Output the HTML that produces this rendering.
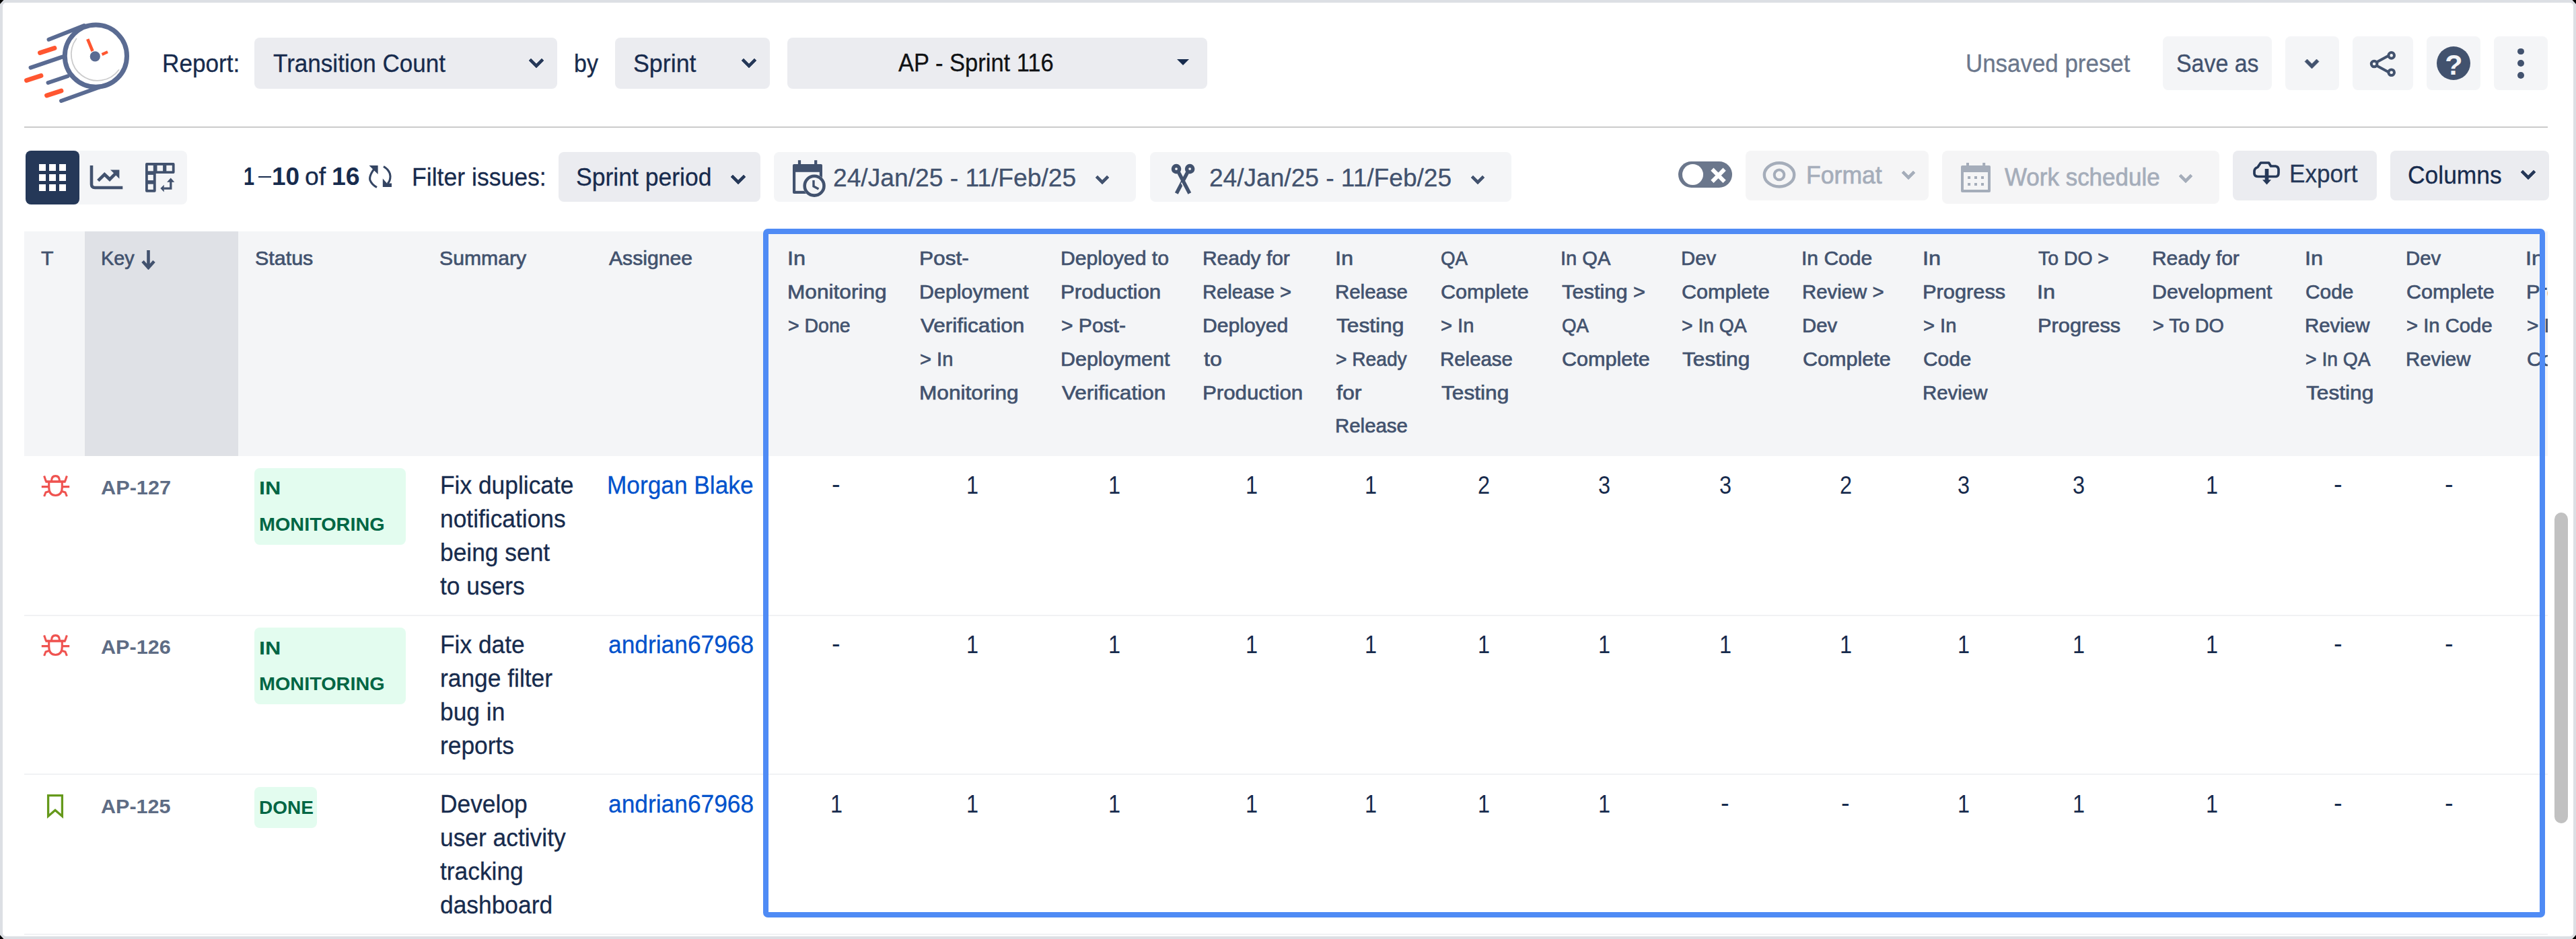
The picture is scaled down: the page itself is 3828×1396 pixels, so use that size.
<!DOCTYPE html>
<html><head><meta charset="utf-8"><title>Transition Count</title>
<style>
html,body{margin:0;padding:0;background:#000;}
body{width:3828px;height:1396px;position:relative;overflow:hidden;font-family:"Liberation Sans",sans-serif;}
#frame{position:absolute;left:0;top:0;width:3828px;height:1396px;background:#dcdfe4;clip-path:polygon(5.5px 0,3822.5px 0,3828px 6px,3828px 1390px,3822.5px 1396px,5.5px 1396px,0 1390px,0 6px);}
#frame2{position:absolute;left:4px;top:4px;width:3820px;height:1388px;background:#fff;border-radius:5px;}
.b{position:absolute;display:block;}
.t{position:absolute;white-space:nowrap;transform-origin:0 50%;display:block;}
</style></head><body><div id="frame"></div><div id="frame2"></div>
<span class="t " style="left:240.94px;top:76.93px;font-size:36px;line-height:36px;color:#172b4d;transform:scaleX(0.9762);-webkit-text-stroke:0.3px #172b4d;">Report:</span>
<div class="b" style="left:378px;top:56px;width:450px;height:75.5px;background:#ebecf0;border-radius:8px;"></div>
<span class="t " style="left:405.95px;top:76.93px;font-size:36px;line-height:36px;color:#172b4d;transform:scaleX(0.9744);-webkit-text-stroke:0.3px #172b4d;">Transition Count</span>
<svg class="b" style="left:786.0px;top:87.2px;overflow:visible;" width="22" height="14" viewBox="0 0 22 14"><path d="M0.00 3.00 L3.00 0.00 L11.00 8.00 L19.00 0.00 L22.00 3.00 L11.00 14.00Z" fill="#253858" stroke="#253858" stroke-width="0.6" stroke-linejoin="round"/></svg>
<span class="t " style="left:853.43px;top:76.93px;font-size:36px;line-height:36px;color:#172b4d;transform:scaleX(0.9432);-webkit-text-stroke:0.3px #172b4d;">by</span>
<div class="b" style="left:914px;top:56px;width:230px;height:75.5px;background:#ebecf0;border-radius:8px;"></div>
<span class="t " style="left:940.54px;top:76.93px;font-size:36px;line-height:36px;color:#172b4d;transform:scaleX(0.9940);-webkit-text-stroke:0.3px #172b4d;">Sprint</span>
<svg class="b" style="left:1102.0px;top:87.2px;overflow:visible;" width="22" height="14" viewBox="0 0 22 14"><path d="M0.00 3.00 L3.00 0.00 L11.00 8.00 L19.00 0.00 L22.00 3.00 L11.00 14.00Z" fill="#253858" stroke="#253858" stroke-width="0.6" stroke-linejoin="round"/></svg>
<div class="b" style="left:1170px;top:56px;width:624px;height:75.5px;background:#ebecf0;border-radius:8px;"></div>
<span class="t " style="left:1335.15px;top:75.53px;font-size:36px;line-height:36px;color:#101214;transform:scaleX(0.9581);-webkit-text-stroke:0.3px #101214;">AP - Sprint 116</span>
<svg class="b" style="left:1749px;top:88px;" width="18" height="9" viewBox="0 0 18 9"><path d="M0 0H18L9 9Z" fill="#172b4d"/></svg>
<span class="t " style="left:2920.53px;top:76.93px;font-size:36px;line-height:36px;color:#6b778c;transform:scaleX(0.9695);-webkit-text-stroke:0.3px #6b778c;">Unsaved preset</span>
<div class="b" style="left:3214px;top:54px;width:162px;height:80px;background:#f4f5f7;border-radius:8px;"></div>
<span class="t " style="left:3234.43px;top:76.53px;font-size:36px;line-height:36px;color:#42526e;transform:scaleX(0.9413);-webkit-text-stroke:0.3px #42526e;">Save as</span>
<div class="b" style="left:3396px;top:54px;width:80px;height:80px;background:#f4f5f7;border-radius:8px;"></div>
<svg class="b" style="left:3425.3px;top:87.7px;overflow:visible;" width="21" height="14" viewBox="0 0 21 14"><path d="M0.00 3.50 L3.50 0.00 L10.50 7.00 L17.50 0.00 L21.00 3.50 L10.50 14.00Z" fill="#42526e" stroke="#42526e" stroke-width="0.6" stroke-linejoin="round"/></svg>
<div class="b" style="left:3496px;top:54px;width:90px;height:80px;background:#f4f5f7;border-radius:8px;"></div>
<div class="b" style="left:3606px;top:54px;width:80px;height:80px;background:#f4f5f7;border-radius:8px;"></div>
<div class="b" style="left:3706px;top:54px;width:80px;height:80px;background:#f4f5f7;border-radius:8px;"></div>
<div class="b" style="left:36px;top:188px;width:3750px;height:2px;background:#cbcbcb;border-radius:0px;"></div>
<div class="b" style="left:38px;top:224px;width:240px;height:80px;background:#f4f5f7;border-radius:8px;"></div>
<div class="b" style="left:38px;top:224px;width:80px;height:80px;background:#253858;border-radius:8px;"></div>
<span class="t " style="left:361.70px;top:245.13px;font-size:36px;line-height:36px;color:#172b4d;font-weight:700;transform:scaleX(0.8021);">1</span>
<div class="b" style="left:384px;top:261.6px;width:18.80000000000001px;height:2.7999999999999545px;background:#172b4d;border-radius:0px;"></div>
<span class="t " style="left:403.89px;top:245.13px;font-size:36px;line-height:36px;color:#172b4d;font-weight:700;transform:scaleX(1.0259);">10</span>
<span class="t " style="left:453.06px;top:245.13px;font-size:36px;line-height:36px;color:#172b4d;transform:scaleX(1.0377);-webkit-text-stroke:0.3px #172b4d;">of</span>
<span class="t " style="left:493.06px;top:245.13px;font-size:36px;line-height:36px;color:#172b4d;font-weight:700;transform:scaleX(1.0400);">16</span>
<span class="t " style="left:612.30px;top:245.53px;font-size:36px;line-height:36px;color:#172b4d;transform:scaleX(0.9886);-webkit-text-stroke:0.3px #172b4d;">Filter issues:</span>
<div class="b" style="left:830px;top:226px;width:300px;height:73.5px;background:#ebecf0;border-radius:8px;"></div>
<span class="t " style="left:855.55px;top:245.53px;font-size:36px;line-height:36px;color:#172b4d;transform:scaleX(0.9873);-webkit-text-stroke:0.3px #172b4d;">Sprint period</span>
<svg class="b" style="left:1085.5px;top:260.0px;overflow:visible;" width="22" height="14" viewBox="0 0 22 14"><path d="M0.00 3.00 L3.00 0.00 L11.00 8.00 L19.00 0.00 L22.00 3.00 L11.00 14.00Z" fill="#253858" stroke="#253858" stroke-width="0.6" stroke-linejoin="round"/></svg>
<div class="b" style="left:1149.5px;top:226px;width:538.5px;height:73.5px;background:#f4f5f7;border-radius:8px;"></div>
<span class="t " style="left:1238.29px;top:247.33px;font-size:36px;line-height:36px;color:#42526e;transform:scaleX(1.0329);-webkit-text-stroke:0.3px #42526e;">24/Jan/25 - 11/Feb/25</span>
<svg class="b" style="left:1628.0px;top:260.7px;overflow:visible;" width="20" height="13" viewBox="0 0 20 13"><path d="M0.00 3.00 L3.00 0.00 L10.00 7.00 L17.00 0.00 L20.00 3.00 L10.00 13.00Z" fill="#42526e" stroke="#42526e" stroke-width="0.6" stroke-linejoin="round"/></svg>
<div class="b" style="left:1708.5px;top:226px;width:537.5px;height:73.5px;background:#f4f5f7;border-radius:8px;"></div>
<span class="t " style="left:1797.30px;top:247.33px;font-size:36px;line-height:36px;color:#42526e;transform:scaleX(1.0300);-webkit-text-stroke:0.3px #42526e;">24/Jan/25 - 11/Feb/25</span>
<svg class="b" style="left:2186.0px;top:260.7px;overflow:visible;" width="20" height="13" viewBox="0 0 20 13"><path d="M0.00 3.00 L3.00 0.00 L10.00 7.00 L17.00 0.00 L20.00 3.00 L10.00 13.00Z" fill="#42526e" stroke="#42526e" stroke-width="0.6" stroke-linejoin="round"/></svg>
<div class="b" style="left:2594px;top:224px;width:272px;height:73.5px;background:#f5f5f6;border-radius:8px;"></div>
<span class="t " style="left:2683.50px;top:242.93px;font-size:36px;line-height:36px;color:#a5adba;transform:scaleX(0.9886);-webkit-text-stroke:0.7px #a5adba;">Format</span>
<svg class="b" style="left:2826.0px;top:254.3px;overflow:visible;" width="20" height="13" viewBox="0 0 20 13"><path d="M0.00 3.00 L3.00 0.00 L10.00 7.00 L17.00 0.00 L20.00 3.00 L10.00 13.00Z" fill="#a5adba" stroke="#a5adba" stroke-width="0.6" stroke-linejoin="round"/></svg>
<div class="b" style="left:2886px;top:224px;width:412px;height:79.39999999999998px;background:#f5f5f6;border-radius:8px;"></div>
<span class="t " style="left:2978.56px;top:245.53px;font-size:36px;line-height:36px;color:#a5adba;transform:scaleX(0.9712);-webkit-text-stroke:0.7px #a5adba;">Work schedule</span>
<svg class="b" style="left:3238.2px;top:258.5px;overflow:visible;" width="20" height="13" viewBox="0 0 20 13"><path d="M0.00 3.00 L3.00 0.00 L10.00 7.00 L17.00 0.00 L20.00 3.00 L10.00 13.00Z" fill="#a5adba" stroke="#a5adba" stroke-width="0.6" stroke-linejoin="round"/></svg>
<div class="b" style="left:3318px;top:224px;width:214px;height:73.5px;background:#ebecf0;border-radius:8px;"></div>
<span class="t " style="left:3402.34px;top:240.93px;font-size:36px;line-height:36px;color:#253858;transform:scaleX(0.9754);-webkit-text-stroke:0.3px #253858;">Export</span>
<div class="b" style="left:3552px;top:224px;width:236px;height:73.5px;background:#ebecf0;border-radius:8px;"></div>
<span class="t " style="left:3577.78px;top:242.93px;font-size:36px;line-height:36px;color:#172b4d;transform:scaleX(0.9837);-webkit-text-stroke:0.3px #172b4d;">Columns</span>
<svg class="b" style="left:3745.8px;top:252.7px;overflow:visible;" width="22" height="14" viewBox="0 0 22 14"><path d="M0.00 3.00 L3.00 0.00 L11.00 8.00 L19.00 0.00 L22.00 3.00 L11.00 14.00Z" fill="#253858" stroke="#253858" stroke-width="0.6" stroke-linejoin="round"/></svg>
<svg class="b" style="left:0px;top:0px;" width="220" height="180" viewBox="0 0 220 180">
<g fill="none" stroke-linecap="round">
<circle cx="142.4" cy="83.2" r="46.1" stroke="#5a6b92" stroke-width="7"/>
<path d="M113.5 57.5A38.6 38.6 0 1 0 176.5 104" stroke="#cbcbcc" stroke-width="1.8"/>
<g stroke="#5a6b92" stroke-width="5.9">
<path d="M72.5 58.8L125 38"/>
<path d="M45.5 100.6L92.5 84.6"/>
<path d="M71.5 123L100.5 113.2"/>
<path d="M91 150L164 123.8"/>
</g>
<g stroke="#ff5630" stroke-width="6.8">
<path d="M59.5 78.6L81 71.6"/>
<path d="M39.5 119.6L61 112.6"/>
<path d="M69.5 142L91 135"/>
</g>
<path d="M130.2 58.2L137.6 76" stroke="#ff5630" stroke-width="4.6" stroke-linecap="butt"/>
<path d="M151.5 81L160 77.2" stroke="#ff5630" stroke-width="4.2" stroke-linecap="butt"/>
</g>
<circle cx="141.3" cy="83.9" r="7.6" fill="#5a6b92"/>
</svg>
<svg class="b" style="left:3500px;top:50px;" width="80" height="80" viewBox="0 0 80 80"><g fill="none" stroke="#42526e" stroke-width="4">
<path d="M31.6 42.5L50 32.5M31.6 47.5L50 57.5"/>
<circle cx="28.1" cy="45" r="4.3"/><circle cx="53.7" cy="32.4" r="4.3"/><circle cx="53.7" cy="57.8" r="4.3"/></g></svg>
<div class="b" style="left:3620.8px;top:69px;width:50px;height:50px;border-radius:50%;background:#42526e"></div>
<span class="t" style="left:3633.2px;top:74.8px;font-size:43px;line-height:43px;font-weight:700;color:#f4f5f7;">?</span>
<div class="b" style="left:3740.8px;top:71.7px;width:9.8px;height:9.8px;border-radius:50%;background:#42526e"></div>
<div class="b" style="left:3740.8px;top:89.2px;width:9.8px;height:9.8px;border-radius:50%;background:#42526e"></div>
<div class="b" style="left:3740.8px;top:106.8px;width:9.8px;height:9.8px;border-radius:50%;background:#42526e"></div>
<div class="b" style="left:58px;top:244px;width:10.3px;height:10.3px;background:#fff"></div>
<div class="b" style="left:73px;top:244px;width:10.3px;height:10.3px;background:#fff"></div>
<div class="b" style="left:88px;top:244px;width:10.3px;height:10.3px;background:#fff"></div>
<div class="b" style="left:58px;top:259px;width:10.3px;height:10.3px;background:#fff"></div>
<div class="b" style="left:73px;top:259px;width:10.3px;height:10.3px;background:#fff"></div>
<div class="b" style="left:88px;top:259px;width:10.3px;height:10.3px;background:#fff"></div>
<div class="b" style="left:58px;top:274px;width:10.3px;height:10.3px;background:#fff"></div>
<div class="b" style="left:73px;top:274px;width:10.3px;height:10.3px;background:#fff"></div>
<div class="b" style="left:88px;top:274px;width:10.3px;height:10.3px;background:#fff"></div>
<svg class="b" style="left:130px;top:243px;" width="56" height="42" viewBox="0 0 56 42"><g fill="none" stroke="#42526e">
<path d="M6 3V31Q6 36 11 36H52.3" stroke-width="4.6"/>
<path d="M15.8 25.6L25.3 16.3L33 23.6L43 13.6" stroke-width="4.8"/></g>
<path d="M34 9.4H47.4V22.8Z" fill="#42526e"/></svg>
<svg class="b" style="left:216.2px;top:241.9px;" width="48" height="48" viewBox="0 0 48 48"><path d="M2 0H41.6Q43.6 0 43.6 2V14.1Q43.6 16.1 41.6 16.1H15.7V41.7Q15.7 43.7 13.7 43.7H2Q0 43.7 0 41.7V2Q0 0 2 0Z" fill="#42526e"/>
<g fill="#f4f5f7"><rect x="3.8" y="3.9" width="8" height="8.4"/><rect x="17.5" y="3.9" width="8.6" height="8.4"/><rect x="31.3" y="3.9" width="8.5" height="8.4"/><rect x="3.8" y="17.9" width="8" height="8.2"/><rect x="3.8" y="31.7" width="8" height="8.2"/></g>
<path d="M27.4 38.1H37.8V28" fill="none" stroke="#42526e" stroke-width="3.3"/>
<path d="M32.1 28.7L37.7 22.4L43.3 28.7Z M27.7 32.7L22.4 38.1L27.7 43.5Z" fill="#42526e"/></svg>
<svg class="b" style="left:546px;top:244px;" width="38" height="38" viewBox="0 0 38 38"><g fill="none" stroke="#344563" stroke-width="3.1">
<path d="M11 6Q2 17 4 24Q6.5 30.5 14 34.5"/>
<path d="M24 3.5Q33.5 9 34 18Q34 25 30 29"/></g>
<path d="M2.5 2H15.6V15L11 10.5Z" fill="#344563"/>
<path d="M22.8 21.5V34H36V28.5H29Z" fill="#344563"/></svg>
<svg class="b" style="left:1176px;top:236px;" width="56" height="60" viewBox="0 0 56 60"><path d="M4 8H44Q46 8 46 10V50Q46 52 44 52H4Q2 52 2 50V10Q2 8 4 8Z" fill="#42526e"/>
<rect x="6.2" y="19.8" width="35.6" height="28" fill="#f4f5f7"/>
<rect x="9.9" y="2.2" width="4.2" height="8" fill="#42526e"/><rect x="34.1" y="2.2" width="4.2" height="8" fill="#42526e"/>
<circle cx="34.1" cy="40.2" r="16.8" fill="#f4f5f7"/>
<circle cx="34.1" cy="40.2" r="14.4" fill="none" stroke="#42526e" stroke-width="4.6"/>
<path d="M33 32V41L40.5 45" fill="none" stroke="#42526e" stroke-width="3.4"/></svg>
<svg class="b" style="left:1738px;top:241px;" width="40" height="50" viewBox="0 0 40 50"><g fill="none" stroke="#42526e">
<circle cx="10" cy="10.1" r="4.6" stroke-width="5.4"/><circle cx="30.1" cy="10.1" r="4.6" stroke-width="5.4"/>
<path d="M27.3 14L10.3 46.4" stroke-width="5.4" />
<path d="M20.6 29L29.8 46.4" stroke-width="8.6" stroke="#f4f5f7"/>
<path d="M12.8 14L29.8 46.4" stroke-width="5.4" />
</g></svg>
<div class="b" style="left:2494px;top:239.8px;width:80px;height:39.4px;border-radius:20px;background:#6b778c"></div>
<div class="b" style="left:2499.6px;top:244.2px;width:31px;height:31px;border-radius:50%;background:#fff"></div>
<svg class="b" style="left:2542px;top:248.5px;" width="23" height="23" viewBox="0 0 23 23"><path d="M4.5 4.8L18.5 18.8M18.5 4.8L4.5 18.8" stroke="#fff" stroke-width="6" stroke-linecap="square"/></svg>
<svg class="b" style="left:2618px;top:238px;" width="52" height="44" viewBox="0 0 52 44"><g fill="none" stroke="#a5adba">
<ellipse cx="26" cy="21.9" rx="22.2" ry="17.6" stroke-width="4.4"/>
<circle cx="26" cy="21.9" r="7.3" stroke-width="4"/></g></svg>
<svg class="b" style="left:2912px;top:240px;" width="48" height="48" viewBox="0 0 48 48"><path d="M4 6H44Q46 6 46 8V44Q46 46 44 46H4Q2 46 2 44V8Q2 6 4 6Z" fill="#a5adba"/>
<rect x="6" y="16" width="36" height="26" fill="#f5f5f6"/>
<rect x="10" y="2" width="4" height="6" fill="#a5adba"/><rect x="34.2" y="2" width="4" height="6" fill="#a5adba"/>
<g fill="#a5adba"><rect x="12.1" y="22" width="4" height="4"/><rect x="12.1" y="32" width="4" height="4"/><rect x="22" y="22" width="4" height="4"/><rect x="22" y="32" width="4" height="4"/><rect x="32" y="22" width="4" height="4"/><rect x="32" y="32" width="4" height="4"/></g></svg>
<svg class="b" style="left:3345.6px;top:237.5px;" width="46" height="40" viewBox="0 0 46 40"><path d="M10 24.5H36.5Q40 24 40 19V13.5Q39.5 9.5 35.5 9H28.5L25.5 4H13.5L9 10.5Q4.5 12 4 16V20.5Q4.5 24.5 10 24.5Z" fill="none" stroke="#253858" stroke-width="3.7" stroke-linejoin="round"/>
<rect x="19.7" y="13" width="5.6" height="18" fill="#253858"/>
<path d="M16 29.3H29L22.5 36.4Z" fill="#253858"/></svg>
<div class="b" style="left:36px;top:344px;width:3750px;height:333.5px;background:#f4f5f7;border-radius:0px;"></div>
<div class="b" style="left:126px;top:344px;width:228px;height:333.5px;background:#dfe1e6;border-radius:0px;"></div>
<span class="t " style="left:61.04px;top:367.67px;font-size:30.4px;line-height:30.4px;color:#42526e;transform:scaleX(0.9984);-webkit-text-stroke:0.7px #42526e;">T</span>
<span class="t " style="left:149.75px;top:367.67px;font-size:30.4px;line-height:30.4px;color:#42526e;transform:scaleX(0.9473);-webkit-text-stroke:0.7px #42526e;">Key</span>
<span class="t " style="left:378.68px;top:367.67px;font-size:30.4px;line-height:30.4px;color:#42526e;transform:scaleX(1.0018);-webkit-text-stroke:0.7px #42526e;">Status</span>
<span class="t " style="left:652.99px;top:367.67px;font-size:30.4px;line-height:30.4px;color:#42526e;transform:scaleX(0.9933);-webkit-text-stroke:0.7px #42526e;">Summary</span>
<span class="t " style="left:905.35px;top:367.67px;font-size:30.4px;line-height:30.4px;color:#42526e;transform:scaleX(0.9925);-webkit-text-stroke:0.7px #42526e;">Assignee</span>
<svg class="b" style="left:210px;top:371px;" width="21" height="30" viewBox="0 0 21 30"><path d="M10.5 1V26M2 17.5L10.5 27L19 17.5" fill="none" stroke="#42526e" stroke-width="4.6" stroke-linejoin="miter"/></svg>
<div class="b" style="left:36px;top:344px;width:3750px;height:334px;overflow:hidden">
<span class="t " style="left:1133.62px;top:24.37px;font-size:30.4px;line-height:30.4px;color:#42526e;transform:scaleX(1.0691);-webkit-text-stroke:0.7px #42526e;">In</span>
<span class="t " style="left:1134.02px;top:74.17px;font-size:30.4px;line-height:30.4px;color:#42526e;transform:scaleX(1.0403);-webkit-text-stroke:0.7px #42526e;">Monitoring</span>
<span class="t " style="left:1135.20px;top:123.97px;font-size:30.4px;line-height:30.4px;color:#42526e;transform:scaleX(0.9372);-webkit-text-stroke:0.7px #42526e;">&gt; Done</span>
<span class="t " style="left:1329.52px;top:24.37px;font-size:30.4px;line-height:30.4px;color:#42526e;transform:scaleX(1.0419);-webkit-text-stroke:0.7px #42526e;">Post-</span>
<span class="t " style="left:1329.61px;top:74.17px;font-size:30.4px;line-height:30.4px;color:#42526e;transform:scaleX(1.0013);-webkit-text-stroke:0.7px #42526e;">Deployment</span>
<span class="t " style="left:1331.97px;top:123.97px;font-size:30.4px;line-height:30.4px;color:#42526e;transform:scaleX(1.0376);-webkit-text-stroke:0.7px #42526e;">Verification</span>
<span class="t " style="left:1330.67px;top:173.77px;font-size:30.4px;line-height:30.4px;color:#42526e;transform:scaleX(0.9588);-webkit-text-stroke:0.7px #42526e;">&gt; In</span>
<span class="t " style="left:1329.52px;top:223.57px;font-size:30.4px;line-height:30.4px;color:#42526e;transform:scaleX(1.0403);-webkit-text-stroke:0.7px #42526e;">Monitoring</span>
<span class="t " style="left:1539.64px;top:24.37px;font-size:30.4px;line-height:30.4px;color:#42526e;transform:scaleX(0.9922);-webkit-text-stroke:0.7px #42526e;">Deployed to</span>
<span class="t " style="left:1539.55px;top:74.17px;font-size:30.4px;line-height:30.4px;color:#42526e;transform:scaleX(1.0271);-webkit-text-stroke:0.7px #42526e;">Production</span>
<span class="t " style="left:1540.62px;top:123.97px;font-size:30.4px;line-height:30.4px;color:#42526e;transform:scaleX(0.9874);-webkit-text-stroke:0.7px #42526e;">&gt; Post-</span>
<span class="t " style="left:1539.61px;top:173.77px;font-size:30.4px;line-height:30.4px;color:#42526e;transform:scaleX(1.0013);-webkit-text-stroke:0.7px #42526e;">Deployment</span>
<span class="t " style="left:1541.97px;top:223.57px;font-size:30.4px;line-height:30.4px;color:#42526e;transform:scaleX(1.0376);-webkit-text-stroke:0.7px #42526e;">Verification</span>
<span class="t " style="left:1750.65px;top:24.37px;font-size:30.4px;line-height:30.4px;color:#42526e;transform:scaleX(0.9853);-webkit-text-stroke:0.7px #42526e;">Ready for</span>
<span class="t " style="left:1750.72px;top:74.17px;font-size:30.4px;line-height:30.4px;color:#42526e;transform:scaleX(0.9596);-webkit-text-stroke:0.7px #42526e;">Release &gt;</span>
<span class="t " style="left:1750.64px;top:123.97px;font-size:30.4px;line-height:30.4px;color:#42526e;transform:scaleX(0.9903);-webkit-text-stroke:0.7px #42526e;">Deployed</span>
<span class="t " style="left:1752.57px;top:173.77px;font-size:30.4px;line-height:30.4px;color:#42526e;transform:scaleX(1.0577);-webkit-text-stroke:0.7px #42526e;">to</span>
<span class="t " style="left:1750.55px;top:223.57px;font-size:30.4px;line-height:30.4px;color:#42526e;transform:scaleX(1.0271);-webkit-text-stroke:0.7px #42526e;">Production</span>
<span class="t " style="left:1947.62px;top:24.37px;font-size:30.4px;line-height:30.4px;color:#42526e;transform:scaleX(1.0691);-webkit-text-stroke:0.7px #42526e;">In</span>
<span class="t " style="left:1948.20px;top:74.17px;font-size:30.4px;line-height:30.4px;color:#42526e;transform:scaleX(0.9678);-webkit-text-stroke:0.7px #42526e;">Release</span>
<span class="t " style="left:1949.92px;top:123.97px;font-size:30.4px;line-height:30.4px;color:#42526e;transform:scaleX(1.0418);-webkit-text-stroke:0.7px #42526e;">Testing</span>
<span class="t " style="left:1949.21px;top:173.77px;font-size:30.4px;line-height:30.4px;color:#42526e;transform:scaleX(0.9260);-webkit-text-stroke:0.7px #42526e;">&gt; Ready</span>
<span class="t " style="left:1950.15px;top:223.57px;font-size:30.4px;line-height:30.4px;color:#42526e;transform:scaleX(1.0561);-webkit-text-stroke:0.7px #42526e;">for</span>
<span class="t " style="left:1948.20px;top:273.37px;font-size:30.4px;line-height:30.4px;color:#42526e;transform:scaleX(0.9678);-webkit-text-stroke:0.7px #42526e;">Release</span>
<span class="t " style="left:2105.30px;top:24.37px;font-size:30.4px;line-height:30.4px;color:#42526e;transform:scaleX(0.9109);-webkit-text-stroke:0.7px #42526e;">QA</span>
<span class="t " style="left:2105.02px;top:74.17px;font-size:30.4px;line-height:30.4px;color:#42526e;transform:scaleX(1.0055);-webkit-text-stroke:0.7px #42526e;">Complete</span>
<span class="t " style="left:2105.17px;top:123.97px;font-size:30.4px;line-height:30.4px;color:#42526e;transform:scaleX(0.9588);-webkit-text-stroke:0.7px #42526e;">&gt; In</span>
<span class="t " style="left:2104.20px;top:173.77px;font-size:30.4px;line-height:30.4px;color:#42526e;transform:scaleX(0.9678);-webkit-text-stroke:0.7px #42526e;">Release</span>
<span class="t " style="left:2105.92px;top:223.57px;font-size:30.4px;line-height:30.4px;color:#42526e;transform:scaleX(1.0418);-webkit-text-stroke:0.7px #42526e;">Testing</span>
<span class="t " style="left:2283.43px;top:24.37px;font-size:30.4px;line-height:30.4px;color:#42526e;transform:scaleX(0.9568);-webkit-text-stroke:0.7px #42526e;">In QA</span>
<span class="t " style="left:2285.43px;top:74.17px;font-size:30.4px;line-height:30.4px;color:#42526e;transform:scaleX(1.0130);-webkit-text-stroke:0.7px #42526e;">Testing &gt;</span>
<span class="t " style="left:2284.80px;top:123.97px;font-size:30.4px;line-height:30.4px;color:#42526e;transform:scaleX(0.9109);-webkit-text-stroke:0.7px #42526e;">QA</span>
<span class="t " style="left:2284.52px;top:173.77px;font-size:30.4px;line-height:30.4px;color:#42526e;transform:scaleX(1.0055);-webkit-text-stroke:0.7px #42526e;">Complete</span>
<span class="t " style="left:2462.40px;top:24.37px;font-size:30.4px;line-height:30.4px;color:#42526e;transform:scaleX(0.9645);-webkit-text-stroke:0.7px #42526e;">Dev</span>
<span class="t " style="left:2463.22px;top:74.17px;font-size:30.4px;line-height:30.4px;color:#42526e;transform:scaleX(1.0055);-webkit-text-stroke:0.7px #42526e;">Complete</span>
<span class="t " style="left:2463.41px;top:123.97px;font-size:30.4px;line-height:30.4px;color:#42526e;transform:scaleX(0.9312);-webkit-text-stroke:0.7px #42526e;">&gt; In QA</span>
<span class="t " style="left:2464.12px;top:173.77px;font-size:30.4px;line-height:30.4px;color:#42526e;transform:scaleX(1.0418);-webkit-text-stroke:0.7px #42526e;">Testing</span>
<span class="t " style="left:2641.34px;top:24.37px;font-size:30.4px;line-height:30.4px;color:#42526e;transform:scaleX(0.9888);-webkit-text-stroke:0.7px #42526e;">In Code</span>
<span class="t " style="left:2641.70px;top:74.17px;font-size:30.4px;line-height:30.4px;color:#42526e;transform:scaleX(0.9660);-webkit-text-stroke:0.7px #42526e;">Review &gt;</span>
<span class="t " style="left:2641.70px;top:123.97px;font-size:30.4px;line-height:30.4px;color:#42526e;transform:scaleX(0.9645);-webkit-text-stroke:0.7px #42526e;">Dev</span>
<span class="t " style="left:2642.52px;top:173.77px;font-size:30.4px;line-height:30.4px;color:#42526e;transform:scaleX(1.0055);-webkit-text-stroke:0.7px #42526e;">Complete</span>
<span class="t " style="left:2820.62px;top:24.37px;font-size:30.4px;line-height:30.4px;color:#42526e;transform:scaleX(1.0691);-webkit-text-stroke:0.7px #42526e;">In</span>
<span class="t " style="left:2821.09px;top:74.17px;font-size:30.4px;line-height:30.4px;color:#42526e;transform:scaleX(1.0129);-webkit-text-stroke:0.7px #42526e;">Progress</span>
<span class="t " style="left:2822.17px;top:123.97px;font-size:30.4px;line-height:30.4px;color:#42526e;transform:scaleX(0.9588);-webkit-text-stroke:0.7px #42526e;">&gt; In</span>
<span class="t " style="left:2822.05px;top:173.77px;font-size:30.4px;line-height:30.4px;color:#42526e;transform:scaleX(0.9836);-webkit-text-stroke:0.7px #42526e;">Code</span>
<span class="t " style="left:2821.20px;top:223.57px;font-size:30.4px;line-height:30.4px;color:#42526e;transform:scaleX(0.9676);-webkit-text-stroke:0.7px #42526e;">Review</span>
<span class="t " style="left:2993.48px;top:24.37px;font-size:30.4px;line-height:30.4px;color:#42526e;transform:scaleX(0.9343);-webkit-text-stroke:0.7px #42526e;">To DO &gt;</span>
<span class="t " style="left:2991.12px;top:74.17px;font-size:30.4px;line-height:30.4px;color:#42526e;transform:scaleX(1.0691);-webkit-text-stroke:0.7px #42526e;">In</span>
<span class="t " style="left:2991.59px;top:123.97px;font-size:30.4px;line-height:30.4px;color:#42526e;transform:scaleX(1.0129);-webkit-text-stroke:0.7px #42526e;">Progress</span>
<span class="t " style="left:3162.25px;top:24.37px;font-size:30.4px;line-height:30.4px;color:#42526e;transform:scaleX(0.9853);-webkit-text-stroke:0.7px #42526e;">Ready for</span>
<span class="t " style="left:3162.23px;top:74.17px;font-size:30.4px;line-height:30.4px;color:#42526e;transform:scaleX(0.9969);-webkit-text-stroke:0.7px #42526e;">Development</span>
<span class="t " style="left:3163.28px;top:123.97px;font-size:30.4px;line-height:30.4px;color:#42526e;transform:scaleX(0.9467);-webkit-text-stroke:0.7px #42526e;">&gt; To DO</span>
<span class="t " style="left:3388.82px;top:24.37px;font-size:30.4px;line-height:30.4px;color:#42526e;transform:scaleX(1.0691);-webkit-text-stroke:0.7px #42526e;">In</span>
<span class="t " style="left:3390.25px;top:74.17px;font-size:30.4px;line-height:30.4px;color:#42526e;transform:scaleX(0.9836);-webkit-text-stroke:0.7px #42526e;">Code</span>
<span class="t " style="left:3389.40px;top:123.97px;font-size:30.4px;line-height:30.4px;color:#42526e;transform:scaleX(0.9676);-webkit-text-stroke:0.7px #42526e;">Review</span>
<span class="t " style="left:3390.41px;top:173.77px;font-size:30.4px;line-height:30.4px;color:#42526e;transform:scaleX(0.9312);-webkit-text-stroke:0.7px #42526e;">&gt; In QA</span>
<span class="t " style="left:3391.12px;top:223.57px;font-size:30.4px;line-height:30.4px;color:#42526e;transform:scaleX(1.0418);-webkit-text-stroke:0.7px #42526e;">Testing</span>
<span class="t " style="left:3538.70px;top:24.37px;font-size:30.4px;line-height:30.4px;color:#42526e;transform:scaleX(0.9645);-webkit-text-stroke:0.7px #42526e;">Dev</span>
<span class="t " style="left:3539.52px;top:74.17px;font-size:30.4px;line-height:30.4px;color:#42526e;transform:scaleX(1.0055);-webkit-text-stroke:0.7px #42526e;">Complete</span>
<span class="t " style="left:3539.66px;top:123.97px;font-size:30.4px;line-height:30.4px;color:#42526e;transform:scaleX(0.9624);-webkit-text-stroke:0.7px #42526e;">&gt; In Code</span>
<span class="t " style="left:3538.70px;top:173.77px;font-size:30.4px;line-height:30.4px;color:#42526e;transform:scaleX(0.9676);-webkit-text-stroke:0.7px #42526e;">Review</span>
<span class="t " style="left:3717.12px;top:24.37px;font-size:30.4px;line-height:30.4px;color:#42526e;transform:scaleX(1.0691);-webkit-text-stroke:0.7px #42526e;">In</span>
<span class="t " style="left:3717.59px;top:74.17px;font-size:30.4px;line-height:30.4px;color:#42526e;transform:scaleX(1.0129);-webkit-text-stroke:0.7px #42526e;">Progress</span>
<span class="t " style="left:3718.63px;top:123.97px;font-size:30.4px;line-height:30.4px;color:#42526e;transform:scaleX(0.9818);-webkit-text-stroke:0.7px #42526e;">&gt; Dev</span>
<span class="t " style="left:3718.52px;top:173.77px;font-size:30.4px;line-height:30.4px;color:#42526e;transform:scaleX(1.0055);-webkit-text-stroke:0.7px #42526e;">Complete</span>
</div>
<svg class="b" style="left:60.5px;top:701.5px;" width="44" height="40" viewBox="0 0 44 40"><g fill="none" stroke="#ef5350" stroke-width="3.1">
<path d="M11.7 13.5V22Q11.7 34.5 21.5 34.5Q31.3 34.5 31.3 22V13.5"/>
<path d="M6.5 14H36.5" stroke-width="3.6"/>
<path d="M15.5 13.5Q15.5 5.6 21.5 5.6Q27.5 5.6 27.5 13.5"/>
<path d="M7.5 14L4.6 5.6M35.5 14L38.4 5.6"/>
<path d="M0.8 21.6H11.7M31.3 21.6H42.2" stroke-width="3.3"/>
<path d="M11.7 28.5L7 30L4.6 36M31.3 28.5L36 30L38.4 36"/>
</g></svg>
<span class="t " style="left:150.23px;top:710.11px;font-size:30px;line-height:30px;color:#5e6c84;font-weight:700;transform:scaleX(1.0233);">AP-127</span>
<div class="b" style="left:377.5px;top:696.0px;width:225.5px;height:114.0px;background:#e3fcef;border-radius:8px;"></div>
<span class="t " style="left:384.90px;top:711.37px;font-size:28.5px;line-height:28.5px;color:#006644;font-weight:700;transform:scaleX(1.1325);">IN</span>
<span class="t " style="left:385.13px;top:764.87px;font-size:28.5px;line-height:28.5px;color:#006644;font-weight:700;transform:scaleX(1.0100);">MONITORING</span>
<span class="t " style="left:654.40px;top:704.03px;font-size:36px;line-height:36px;color:#172b4d;transform:scaleX(0.9820);-webkit-text-stroke:0.3px #172b4d;">Fix duplicate</span>
<span class="t " style="left:654.40px;top:754.03px;font-size:36px;line-height:36px;color:#172b4d;transform:scaleX(0.9820);-webkit-text-stroke:0.3px #172b4d;">notifications</span>
<span class="t " style="left:654.40px;top:804.03px;font-size:36px;line-height:36px;color:#172b4d;transform:scaleX(0.9820);-webkit-text-stroke:0.3px #172b4d;">being sent</span>
<span class="t " style="left:654.40px;top:854.03px;font-size:36px;line-height:36px;color:#172b4d;transform:scaleX(0.9820);-webkit-text-stroke:0.3px #172b4d;">to users</span>
<span class="t " style="left:902.33px;top:703.53px;font-size:36px;line-height:36px;color:#0052cc;transform:scaleX(0.9793);-webkit-text-stroke:0.3px #0052cc;">Morgan Blake</span>
<span class="t " style="left:1235.71px;top:701.73px;font-size:36px;line-height:36px;color:#172b4d;transform:scaleX(1.0500);-webkit-text-stroke:0.001px #172b4d;">-</span>
<span class="t " style="left:1435.99px;top:703.53px;font-size:36px;line-height:36px;color:#172b4d;transform:scaleX(0.9000);-webkit-text-stroke:0.001px #172b4d;">1</span>
<span class="t " style="left:1646.99px;top:703.53px;font-size:36px;line-height:36px;color:#172b4d;transform:scaleX(0.9000);-webkit-text-stroke:0.001px #172b4d;">1</span>
<span class="t " style="left:1850.99px;top:703.53px;font-size:36px;line-height:36px;color:#172b4d;transform:scaleX(0.9000);-webkit-text-stroke:0.001px #172b4d;">1</span>
<span class="t " style="left:2027.99px;top:703.53px;font-size:36px;line-height:36px;color:#172b4d;transform:scaleX(0.9000);-webkit-text-stroke:0.001px #172b4d;">1</span>
<span class="t " style="left:2196.49px;top:703.53px;font-size:36px;line-height:36px;color:#172b4d;transform:scaleX(0.9000);-webkit-text-stroke:0.001px #172b4d;">2</span>
<span class="t " style="left:2374.99px;top:703.53px;font-size:36px;line-height:36px;color:#172b4d;transform:scaleX(0.9000);-webkit-text-stroke:0.001px #172b4d;">3</span>
<span class="t " style="left:2554.99px;top:703.53px;font-size:36px;line-height:36px;color:#172b4d;transform:scaleX(0.9000);-webkit-text-stroke:0.001px #172b4d;">3</span>
<span class="t " style="left:2734.49px;top:703.53px;font-size:36px;line-height:36px;color:#172b4d;transform:scaleX(0.9000);-webkit-text-stroke:0.001px #172b4d;">2</span>
<span class="t " style="left:2908.99px;top:703.53px;font-size:36px;line-height:36px;color:#172b4d;transform:scaleX(0.9000);-webkit-text-stroke:0.001px #172b4d;">3</span>
<span class="t " style="left:3079.99px;top:703.53px;font-size:36px;line-height:36px;color:#172b4d;transform:scaleX(0.9000);-webkit-text-stroke:0.001px #172b4d;">3</span>
<span class="t " style="left:3277.99px;top:703.53px;font-size:36px;line-height:36px;color:#172b4d;transform:scaleX(0.9000);-webkit-text-stroke:0.001px #172b4d;">1</span>
<span class="t " style="left:3468.21px;top:701.73px;font-size:36px;line-height:36px;color:#172b4d;transform:scaleX(1.0500);-webkit-text-stroke:0.001px #172b4d;">-</span>
<span class="t " style="left:3632.71px;top:701.73px;font-size:36px;line-height:36px;color:#172b4d;transform:scaleX(1.0500);-webkit-text-stroke:0.001px #172b4d;">-</span>
<div class="b" style="left:36px;top:913.5px;width:3750px;height:2.0px;background:#f1f2f4;border-radius:0px;"></div>
<svg class="b" style="left:60.5px;top:938.7px;" width="44" height="40" viewBox="0 0 44 40"><g fill="none" stroke="#ef5350" stroke-width="3.1">
<path d="M11.7 13.5V22Q11.7 34.5 21.5 34.5Q31.3 34.5 31.3 22V13.5"/>
<path d="M6.5 14H36.5" stroke-width="3.6"/>
<path d="M15.5 13.5Q15.5 5.6 21.5 5.6Q27.5 5.6 27.5 13.5"/>
<path d="M7.5 14L4.6 5.6M35.5 14L38.4 5.6"/>
<path d="M0.8 21.6H11.7M31.3 21.6H42.2" stroke-width="3.3"/>
<path d="M11.7 28.5L7 30L4.6 36M31.3 28.5L36 30L38.4 36"/>
</g></svg>
<span class="t " style="left:150.23px;top:947.31px;font-size:30px;line-height:30px;color:#5e6c84;font-weight:700;transform:scaleX(1.0203);">AP-126</span>
<div class="b" style="left:377.5px;top:933.2px;width:225.5px;height:114.0px;background:#e3fcef;border-radius:8px;"></div>
<span class="t " style="left:384.90px;top:948.57px;font-size:28.5px;line-height:28.5px;color:#006644;font-weight:700;transform:scaleX(1.1325);">IN</span>
<span class="t " style="left:385.13px;top:1002.07px;font-size:28.5px;line-height:28.5px;color:#006644;font-weight:700;transform:scaleX(1.0100);">MONITORING</span>
<span class="t " style="left:654.40px;top:941.23px;font-size:36px;line-height:36px;color:#172b4d;transform:scaleX(0.9820);-webkit-text-stroke:0.3px #172b4d;">Fix date</span>
<span class="t " style="left:654.40px;top:991.23px;font-size:36px;line-height:36px;color:#172b4d;transform:scaleX(0.9820);-webkit-text-stroke:0.3px #172b4d;">range filter</span>
<span class="t " style="left:654.40px;top:1041.23px;font-size:36px;line-height:36px;color:#172b4d;transform:scaleX(0.9820);-webkit-text-stroke:0.3px #172b4d;">bug in</span>
<span class="t " style="left:654.40px;top:1091.23px;font-size:36px;line-height:36px;color:#172b4d;transform:scaleX(0.9820);-webkit-text-stroke:0.3px #172b4d;">reports</span>
<span class="t " style="left:903.65px;top:940.73px;font-size:36px;line-height:36px;color:#0052cc;transform:scaleX(0.9817);-webkit-text-stroke:0.3px #0052cc;">andrian67968</span>
<span class="t " style="left:1235.71px;top:938.93px;font-size:36px;line-height:36px;color:#172b4d;transform:scaleX(1.0500);-webkit-text-stroke:0.001px #172b4d;">-</span>
<span class="t " style="left:1435.99px;top:940.73px;font-size:36px;line-height:36px;color:#172b4d;transform:scaleX(0.9000);-webkit-text-stroke:0.001px #172b4d;">1</span>
<span class="t " style="left:1646.99px;top:940.73px;font-size:36px;line-height:36px;color:#172b4d;transform:scaleX(0.9000);-webkit-text-stroke:0.001px #172b4d;">1</span>
<span class="t " style="left:1850.99px;top:940.73px;font-size:36px;line-height:36px;color:#172b4d;transform:scaleX(0.9000);-webkit-text-stroke:0.001px #172b4d;">1</span>
<span class="t " style="left:2027.99px;top:940.73px;font-size:36px;line-height:36px;color:#172b4d;transform:scaleX(0.9000);-webkit-text-stroke:0.001px #172b4d;">1</span>
<span class="t " style="left:2196.49px;top:940.73px;font-size:36px;line-height:36px;color:#172b4d;transform:scaleX(0.9000);-webkit-text-stroke:0.001px #172b4d;">1</span>
<span class="t " style="left:2374.99px;top:940.73px;font-size:36px;line-height:36px;color:#172b4d;transform:scaleX(0.9000);-webkit-text-stroke:0.001px #172b4d;">1</span>
<span class="t " style="left:2554.99px;top:940.73px;font-size:36px;line-height:36px;color:#172b4d;transform:scaleX(0.9000);-webkit-text-stroke:0.001px #172b4d;">1</span>
<span class="t " style="left:2734.49px;top:940.73px;font-size:36px;line-height:36px;color:#172b4d;transform:scaleX(0.9000);-webkit-text-stroke:0.001px #172b4d;">1</span>
<span class="t " style="left:2908.99px;top:940.73px;font-size:36px;line-height:36px;color:#172b4d;transform:scaleX(0.9000);-webkit-text-stroke:0.001px #172b4d;">1</span>
<span class="t " style="left:3079.99px;top:940.73px;font-size:36px;line-height:36px;color:#172b4d;transform:scaleX(0.9000);-webkit-text-stroke:0.001px #172b4d;">1</span>
<span class="t " style="left:3277.99px;top:940.73px;font-size:36px;line-height:36px;color:#172b4d;transform:scaleX(0.9000);-webkit-text-stroke:0.001px #172b4d;">1</span>
<span class="t " style="left:3468.21px;top:938.93px;font-size:36px;line-height:36px;color:#172b4d;transform:scaleX(1.0500);-webkit-text-stroke:0.001px #172b4d;">-</span>
<span class="t " style="left:3632.71px;top:938.93px;font-size:36px;line-height:36px;color:#172b4d;transform:scaleX(1.0500);-webkit-text-stroke:0.001px #172b4d;">-</span>
<div class="b" style="left:36px;top:1150.3px;width:3750px;height:2.0px;background:#f1f2f4;border-radius:0px;"></div>
<svg class="b" style="left:68.2px;top:1179.4px;" width="28" height="40" viewBox="0 0 28 40"><path d="M3.6 3.6H24.4V34.5L14 25.5L3.6 34.5Z" fill="none" stroke="#65991b" stroke-width="3.3" stroke-linejoin="miter"/></svg>
<span class="t " style="left:150.24px;top:1184.11px;font-size:30px;line-height:30px;color:#5e6c84;font-weight:700;transform:scaleX(1.0180);">AP-125</span>
<div class="b" style="left:377.5px;top:1170.0px;width:93.5px;height:61.0px;background:#e3fcef;border-radius:8px;"></div>
<span class="t " style="left:385.18px;top:1186.37px;font-size:28.5px;line-height:28.5px;color:#006644;font-weight:700;transform:scaleX(0.9818);">DONE</span>
<span class="t " style="left:654.40px;top:1178.03px;font-size:36px;line-height:36px;color:#172b4d;transform:scaleX(0.9820);-webkit-text-stroke:0.3px #172b4d;">Develop</span>
<span class="t " style="left:654.40px;top:1228.03px;font-size:36px;line-height:36px;color:#172b4d;transform:scaleX(0.9820);-webkit-text-stroke:0.3px #172b4d;">user activity</span>
<span class="t " style="left:654.40px;top:1278.03px;font-size:36px;line-height:36px;color:#172b4d;transform:scaleX(0.9820);-webkit-text-stroke:0.3px #172b4d;">tracking</span>
<span class="t " style="left:654.40px;top:1328.03px;font-size:36px;line-height:36px;color:#172b4d;transform:scaleX(0.9820);-webkit-text-stroke:0.3px #172b4d;">dashboard</span>
<span class="t " style="left:903.65px;top:1177.53px;font-size:36px;line-height:36px;color:#0052cc;transform:scaleX(0.9817);-webkit-text-stroke:0.3px #0052cc;">andrian67968</span>
<span class="t " style="left:1233.99px;top:1177.53px;font-size:36px;line-height:36px;color:#172b4d;transform:scaleX(0.9000);-webkit-text-stroke:0.001px #172b4d;">1</span>
<span class="t " style="left:1435.99px;top:1177.53px;font-size:36px;line-height:36px;color:#172b4d;transform:scaleX(0.9000);-webkit-text-stroke:0.001px #172b4d;">1</span>
<span class="t " style="left:1646.99px;top:1177.53px;font-size:36px;line-height:36px;color:#172b4d;transform:scaleX(0.9000);-webkit-text-stroke:0.001px #172b4d;">1</span>
<span class="t " style="left:1850.99px;top:1177.53px;font-size:36px;line-height:36px;color:#172b4d;transform:scaleX(0.9000);-webkit-text-stroke:0.001px #172b4d;">1</span>
<span class="t " style="left:2027.99px;top:1177.53px;font-size:36px;line-height:36px;color:#172b4d;transform:scaleX(0.9000);-webkit-text-stroke:0.001px #172b4d;">1</span>
<span class="t " style="left:2196.49px;top:1177.53px;font-size:36px;line-height:36px;color:#172b4d;transform:scaleX(0.9000);-webkit-text-stroke:0.001px #172b4d;">1</span>
<span class="t " style="left:2374.99px;top:1177.53px;font-size:36px;line-height:36px;color:#172b4d;transform:scaleX(0.9000);-webkit-text-stroke:0.001px #172b4d;">1</span>
<span class="t " style="left:2556.71px;top:1175.73px;font-size:36px;line-height:36px;color:#172b4d;transform:scaleX(1.0500);-webkit-text-stroke:0.001px #172b4d;">-</span>
<span class="t " style="left:2736.21px;top:1175.73px;font-size:36px;line-height:36px;color:#172b4d;transform:scaleX(1.0500);-webkit-text-stroke:0.001px #172b4d;">-</span>
<span class="t " style="left:2908.99px;top:1177.53px;font-size:36px;line-height:36px;color:#172b4d;transform:scaleX(0.9000);-webkit-text-stroke:0.001px #172b4d;">1</span>
<span class="t " style="left:3079.99px;top:1177.53px;font-size:36px;line-height:36px;color:#172b4d;transform:scaleX(0.9000);-webkit-text-stroke:0.001px #172b4d;">1</span>
<span class="t " style="left:3277.99px;top:1177.53px;font-size:36px;line-height:36px;color:#172b4d;transform:scaleX(0.9000);-webkit-text-stroke:0.001px #172b4d;">1</span>
<span class="t " style="left:3468.21px;top:1175.73px;font-size:36px;line-height:36px;color:#172b4d;transform:scaleX(1.0500);-webkit-text-stroke:0.001px #172b4d;">-</span>
<span class="t " style="left:3632.71px;top:1175.73px;font-size:36px;line-height:36px;color:#172b4d;transform:scaleX(1.0500);-webkit-text-stroke:0.001px #172b4d;">-</span>
<div class="b" style="left:36px;top:1388px;width:3750px;height:2px;background:#f1f2f4;border-radius:0px;"></div>
<div class="b" style="left:1134px;top:340px;width:2648px;height:1024px;box-sizing:border-box;border:8px solid #4f8bf5;border-radius:7px"></div>
<div class="b" style="left:3796px;top:762px;width:20px;height:462px;background:#c1c1c1;border-radius:10px;"></div>
</body></html>
